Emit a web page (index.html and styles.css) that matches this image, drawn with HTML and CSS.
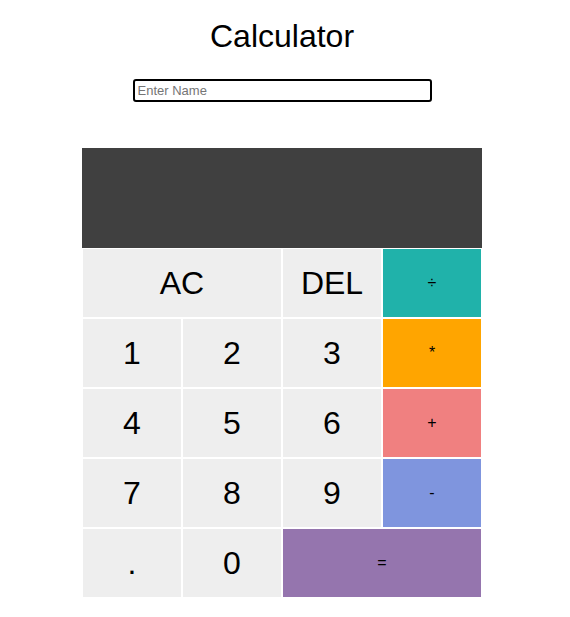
FILE: index.html
```html
<!DOCTYPE html>
<html>
<head>
<meta charset="utf-8">
<title>Calculator</title>
<link rel="stylesheet" href="styles.css">
</head>
<body>
<div class="page">
  <h1 class="title">Calculator</h1>
  <div class="name-row"><input class="name" type="text" placeholder="Enter Name" autofocus></div>
  <div class="calc">
    <div class="display"></div>
    <button class="key span2">AC</button>
    <button class="key">DEL</button>
    <button class="key op div">÷</button>
    <button class="key">1</button>
    <button class="key">2</button>
    <button class="key">3</button>
    <button class="key op mul">*</button>
    <button class="key">4</button>
    <button class="key">5</button>
    <button class="key">6</button>
    <button class="key op add">+</button>
    <button class="key">7</button>
    <button class="key">8</button>
    <button class="key">9</button>
    <button class="key op sub">-</button>
    <button class="key">.</button>
    <button class="key">0</button>
    <button class="key op eq span2">=</button>
  </div>
</div>
</body>
</html>
```

FILE: styles.css
```css
html, body {
  margin: 0;
  padding: 0;
  background: #fff;
}
body {
  font-family: "Liberation Sans", Arial, sans-serif;
  padding: 0 6px 0 0;
}
.page {
  display: flex;
  flex-direction: column;
  align-items: center;
}
.title {
  font-size: 32px;
  font-weight: normal;
  margin: 18px 0 0 0;
  line-height: 37px;
  color: #000;
}
.name-row {
  margin-top: 24px;
  display: flex;
}
.name {
  box-sizing: border-box;
  width: 299px;
  height: 23px;
  border: 2px solid #000;
  border-radius: 3px;
  padding: 0 3px;
  font-family: "Liberation Sans", Arial, sans-serif;
  font-size: 13px;
  outline: none;
  background: #fff;
}
.name::placeholder {
  color: #757575;
}
.calc {
  margin-top: 46px;
  display: grid;
  grid-template-columns: repeat(4, 100px);
  grid-template-rows: 100px repeat(5, 70px);
  width: 400px;
}
.display {
  grid-column: 1 / -1;
  background: #404040;
}
.key {
  box-sizing: border-box;
  border: 1px solid #fff;
  background: #eeeeee;
  font-family: "Liberation Sans", Arial, sans-serif;
  font-size: 32px;
  color: #000;
  padding: 0;
  margin: 0;
  cursor: pointer;
}
.span2 {
  grid-column: span 2;
}
.op {
  font-size: 16px;
}
.div { background: #20b2aa; }
.mul { background: #ffa500; }
.add { background: #f08080; }
.sub { background: #7f95de; }
.eq { background: #9575ae; }
```
